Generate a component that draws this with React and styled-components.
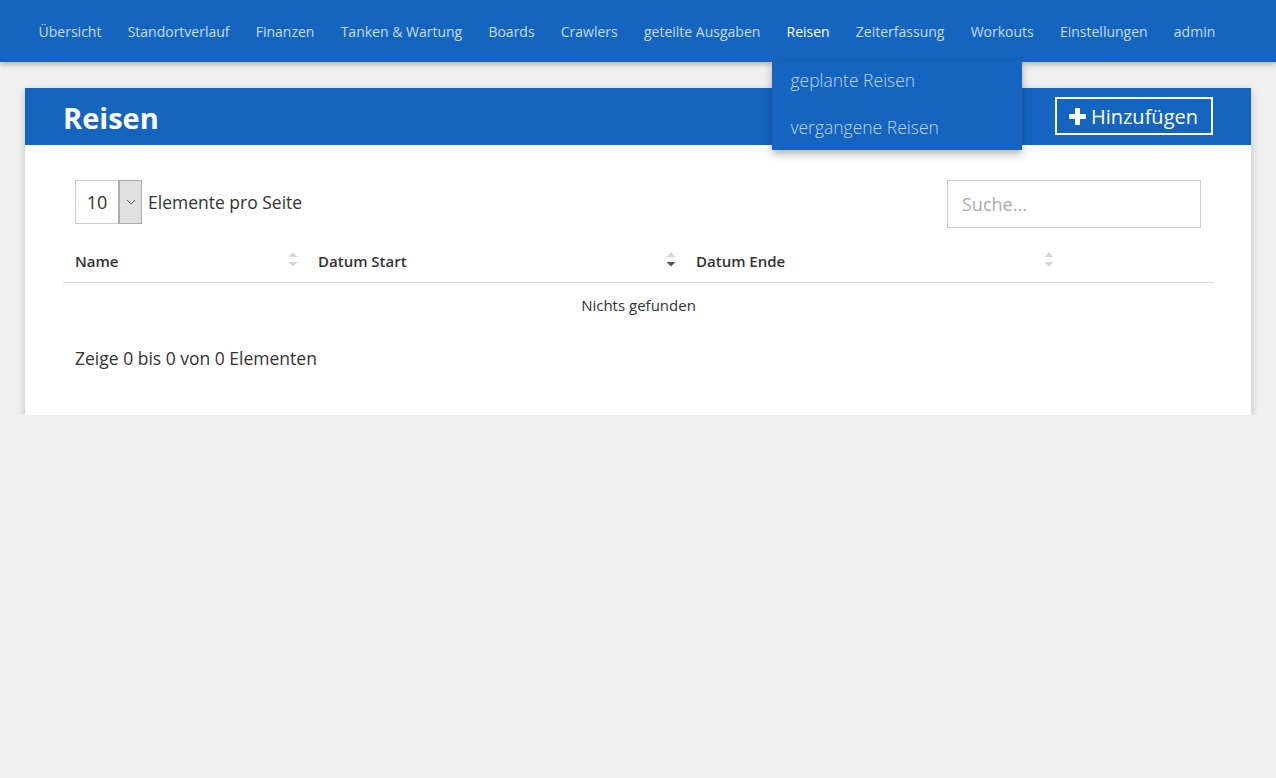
import React from 'react';
import styled, { createGlobalStyle } from 'styled-components';

const GlobalStyle = createGlobalStyle`
    body {
        margin: 0;
        background: #f0f0f0;
        font-family: "Open Sans", "Liberation Sans", sans-serif;
        color: #333;
    }
`;

const navItems = [
    'Übersicht', 'Standortverlauf', 'Finanzen', 'Tanken & Wartung', 'Boards', 'Crawlers',
    'geteilte Ausgaben', 'Reisen', 'Zeiterfassung', 'Workouts', 'Einstellungen', 'admin',
];

const columns = [
    { label: 'Name', width: 243, sort: 'none' },
    { label: 'Datum Start', width: 378, sort: 'desc' },
    { label: 'Datum Ende', width: 378, sort: 'none' },
    { label: '', width: null, sort: null },
];

const SortIcon = ({ state }) => (
    <SortWrap>
        <svg width="10" height="18" viewBox="0 0 10 18">
            <polygon points="0.5,7 9.5,7 5,2.5" fill="#d4d4d4" />
            <polygon points="0.5,12 9.5,12 5,16.5" fill={state === 'desc' ? '#555' : '#d4d4d4'} />
        </svg>
    </SortWrap>
);

const App = () => {
    return (
        <>
            <GlobalStyle />
            <NavBar>
                <NavList>
                    {navItems.map((item) => (
                        <NavItem key={item} $active={item === 'Reisen'}>
                            {item}
                            {item === 'Reisen' && (
                                <Dropdown>
                                    <DropdownItem>geplante Reisen</DropdownItem>
                                    <DropdownItem>vergangene Reisen</DropdownItem>
                                </Dropdown>
                            )}
                        </NavItem>
                    ))}
                </NavList>
            </NavBar>

            <Card>
                <CardHeader>
                    <Title>Reisen</Title>
                    <AddButton>
                        <svg width="17" height="17" viewBox="0 0 17 17">
                            <rect x="6" y="0" width="5" height="17" rx="1" fill="#fff" />
                            <rect x="0" y="6" width="17" height="5" rx="1" fill="#fff" />
                        </svg>
                        Hinzufügen
                    </AddButton>
                </CardHeader>

                <CardBody>
                    <Controls>
                        <LengthControl>
                            <SelectBox>
                                <SelectValue>10</SelectValue>
                                <SelectArrow>
                                    <svg width="10" height="6" viewBox="0 0 10 6">
                                        <polyline points="1,1 5,5 9,1" fill="none" stroke="#555" strokeWidth="1" />
                                    </svg>
                                </SelectArrow>
                            </SelectBox>
                            Elemente pro Seite
                        </LengthControl>
                        <SearchInput placeholder="Suche..." />
                    </Controls>

                    <Table>
                        <thead>
                            <tr>
                                {columns.map((col, i) => (
                                    <HeadCell key={i} style={col.width ? { width: col.width } : undefined}>
                                        {col.label}
                                        {col.sort && <SortIcon state={col.sort} />}
                                    </HeadCell>
                                ))}
                            </tr>
                        </thead>
                        <tbody>
                            <tr>
                                <EmptyCell colSpan={4}>Nichts gefunden</EmptyCell>
                            </tr>
                        </tbody>
                    </Table>

                    <Info>Zeige 0 bis 0 von 0 Elementen</Info>
                </CardBody>
            </Card>
        </>
    );
};

export default App;

// Styled Components
const NavBar = styled.nav`
    height: 62px;
    background: #1565c0;
    box-shadow: 0 2px 6px rgba(0, 0, 0, 0.3);
    position: relative;
    z-index: 2;
`;

const NavList = styled.ul`
    display: flex;
    margin: 0;
    padding: 0 0 0 25.5px;
    list-style: none;
    height: 100%;
`;

const NavItem = styled.li`
    position: relative;
    display: flex;
    align-items: center;
    padding: 0 13.1px 0;
    font-size: 14px;
    color: ${(p) => (p.$active ? '#fff' : '#c6dbf4')};
    white-space: nowrap;
`;

const Dropdown = styled.div`
    position: absolute;
    top: 62px;
    left: -1px;
    width: 250px;
    height: 88px;
    background: #1565c0;
    box-shadow: 0 4px 8px rgba(0, 0, 0, 0.3);
    display: flex;
    flex-direction: column;
`;

const DropdownItem = styled.div`
    height: 46px;
    display: flex;
    align-items: center;
    padding: 0 18px;
    font-size: 17.5px;
    font-weight: 300;
    color: #bcd5f2;
    &:first-child {
        margin-top: -7px;
        height: 51px;
    }
`;

const Card = styled.section`
    margin: 26px 25px 0;
    background: #fff;
    box-shadow: 0 3px 8px rgba(0, 0, 0, 0.22);
`;

const CardHeader = styled.header`
    height: 57px;
    background: #1565c0;
    display: flex;
    align-items: center;
    justify-content: space-between;
    padding: 0 38px;
`;

const Title = styled.h1`
    margin: 0;
    font-size: 29px;
    font-weight: 700;
    color: #fff;
    line-height: 1;
    padding-top: 2px;
`;

const AddButton = styled.button`
    display: flex;
    align-items: center;
    gap: 5px;
    height: 38px;
    margin-top: -1px;
    padding: 0 13px 0 12px;
    background: transparent;
    border: 2px solid #fff;
    color: #fff;
    font-family: inherit;
    font-size: 20px;
`;

const CardBody = styled.div`
    padding: 35px 37px 45px 38px;
`;

const Controls = styled.div`
    display: flex;
    justify-content: space-between;
    align-items: flex-start;
    padding: 0 13px 0 12px;
`;

const LengthControl = styled.label`
    display: flex;
    align-items: center;
    gap: 6px;
    font-size: 17.5px;
    color: #333;
    height: 44px;
`;

const SelectBox = styled.div`
    display: flex;
    width: 67px;
    height: 44px;
    border: 1px solid #ccc;
    box-sizing: border-box;
`;

const SelectValue = styled.span`
    flex: 1;
    display: flex;
    align-items: center;
    justify-content: center;
    font-size: 18px;
    color: #333;
`;

const SelectArrow = styled.span`
    width: 21px;
    display: flex;
    align-items: center;
    justify-content: center;
    background: #e0e0e0;
    margin: -1px -1px -1px 0;
    border-style: solid;
    border-color: #aaa;
    border-width: 1px 1px 1px 2px;
`;

const SearchInput = styled.input`
    width: 254px;
    height: 48px;
    box-sizing: border-box;
    border: 1px solid #ccc;
    padding: 0 14px;
    font-family: inherit;
    font-size: 18px;
    outline: none;
    &::placeholder {
        color: #aaa;
    }
`;

const Table = styled.table`
    width: 100%;
    border-collapse: collapse;
    margin-top: 14px;
`;

const HeadCell = styled.th`
    position: relative;
    height: 40px;
    padding: 0 12px 2px;
    text-align: left;
    font-size: 15px;
    font-weight: 600;
    color: #333;
    border-bottom: 1px solid #ddd;
    box-sizing: border-box;
`;

const SortWrap = styled.span`
    position: absolute;
    right: 8px;
    top: 8px;
    display: flex;
`;

const EmptyCell = styled.td`
    height: 45px;
    text-align: center;
    font-size: 15px;
    color: #333;
    padding: 0;
`;

const Info = styled.div`
    padding: 18px 12px 0;
    font-size: 17.5px;
    color: #333;
`;
